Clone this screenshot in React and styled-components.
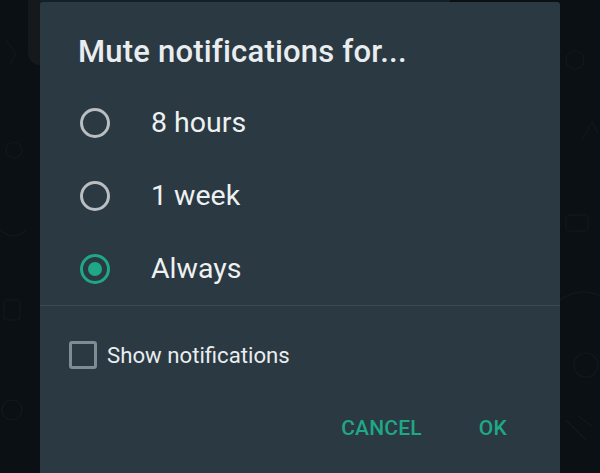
import React from 'react';
import styled, { createGlobalStyle } from 'styled-components';

const GlobalStyle = createGlobalStyle`
  html, body {
    margin: 0;
    padding: 0;
    background: #0a1013;
    overflow: hidden;
  }
  * {
    box-sizing: border-box;
  }
`;

const Screen = styled.div`
  position: relative;
  width: 600px;
  height: 473px;
  overflow: hidden;
  background: #0a1013;
  font-family: Roboto, "Liberation Sans", sans-serif;
`;

const Wallpaper = styled.svg`
  position: absolute;
  inset: 0;
  width: 600px;
  height: 473px;
`;

// dimmed chat bubble peeking out behind the dialog
const BehindCard = styled.div`
  position: absolute;
  left: 28px;
  top: -20px;
  width: 300px;
  height: 85px;
  border-radius: 12px;
  background: #15191b;
`;

const BehindStrip = styled.div`
  position: absolute;
  left: 40px;
  top: 0;
  width: 410px;
  height: 4px;
  background: #132029;
`;

const Dialog = styled.div`
  position: relative;
  margin: 2px 0 0 40px;
  width: 520px;
  height: 490px;
  background: #2b3942;
  border-radius: 3px 3px 0 0;
  padding-top: 32px;
  display: flex;
  flex-direction: column;
  color: #e9edef;
`;

const Title = styled.h1`
  margin: 0;
  padding-left: 38px;
  font-size: 31px;
  font-weight: 500;
  line-height: 36px;
  letter-spacing: 0.2px;
`;

const OptionList = styled.div`
  margin-top: 16px;
  display: flex;
  flex-direction: column;
`;

const OptionRow = styled.div`
  height: 73px;
  display: flex;
  align-items: center;
  padding-left: 40px;
  gap: 41px;
`;

const Radio = styled.span`
  width: 30px;
  height: 30px;
  border-radius: 50%;
  border: 3px solid ${p => (p.checked ? '#1ea886' : '#b8bec1')};
  display: flex;
  align-items: center;
  justify-content: center;

  &::after {
    content: '';
    width: 14px;
    height: 14px;
    border-radius: 50%;
    background: #1ea886;
    display: ${p => (p.checked ? 'block' : 'none')};
  }
`;

const OptionLabel = styled.span`
  font-size: 28.5px;
  line-height: 32px;
  color: #eef1f2;
`;

const Divider = styled.div`
  height: 1px;
  background: #3c4a53;
`;

const CheckRow = styled.div`
  margin-top: 35px;
  display: flex;
  align-items: center;
  padding-left: 29px;
  gap: 10px;
`;

const CheckBox = styled.span`
  width: 28px;
  height: 28px;
  border: 3px solid #7d8c95;
  border-radius: 3px;
`;

const CheckLabel = styled.span`
  font-size: 22.2px;
  line-height: 28px;
  color: #e9edef;
`;

const Actions = styled.div`
  margin-top: 45px;
  display: flex;
  justify-content: flex-end;
  gap: 57px;
  padding-right: 53px;
`;

const ActionButton = styled.button`
  background: none;
  border: none;
  padding: 0;
  font-family: Roboto, "Liberation Sans", sans-serif;
  font-size: 21px;
  font-weight: 500;
  line-height: 28px;
  color: #1ea886;
  letter-spacing: 0.2px;
`;

const options = [
  { label: '8 hours', checked: false },
  { label: '1 week', checked: false },
  { label: 'Always', checked: true },
];

export default function App() {
  return (
    <Screen>
      <GlobalStyle />
      <Wallpaper viewBox="0 0 600 473" fill="none" stroke="#12191c" strokeWidth="1.2">
        <circle cx="575" cy="60" r="9" />
        <path d="M582 140 l10 -18 l6 12" />
        <rect x="566" y="215" width="22" height="16" rx="4" />
        <path d="M560 300 q20 -14 40 -4" />
        <circle cx="586" cy="365" r="12" />
        <path d="M566 420 l20 20 m-8 -24 l14 10" />
        <path d="M6 40 l10 14 l-6 10" />
        <circle cx="14" cy="150" r="8" />
        <path d="M0 230 q14 12 26 0" />
        <rect x="4" y="300" width="16" height="20" rx="3" />
        <circle cx="12" cy="410" r="10" />
      </Wallpaper>
      <BehindCard />
      <BehindStrip />
      <Dialog>
        <Title>Mute notifications for...</Title>
        <OptionList>
          {options.map(o => (
            <OptionRow key={o.label}>
              <Radio checked={o.checked} />
              <OptionLabel>{o.label}</OptionLabel>
            </OptionRow>
          ))}
        </OptionList>
        <Divider />
        <CheckRow>
          <CheckBox />
          <CheckLabel>Show notifications</CheckLabel>
        </CheckRow>
        <Actions>
          <ActionButton>CANCEL</ActionButton>
          <ActionButton>OK</ActionButton>
        </Actions>
      </Dialog>
    </Screen>
  );
}
